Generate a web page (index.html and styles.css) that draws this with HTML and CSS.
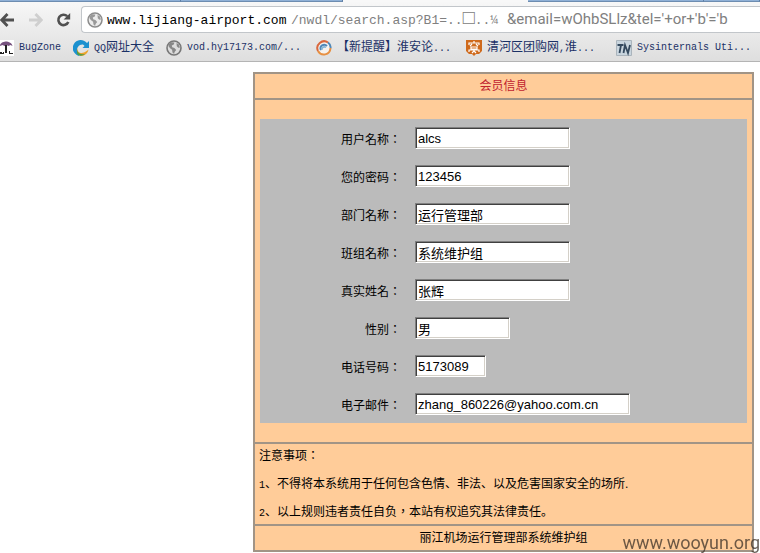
FILE: index.html
```html
<!DOCTYPE html>
<html>
<head>
    <meta charset="UTF-8">
    <meta name="viewport" content="width=device-width, initial-scale=1.0">
    <title>会员信息</title>
    <link rel="stylesheet" href="styles.css">
</head>
<body>
    <header class="browser">
        <div class="tabs">
            <span class="tab tab-first"></span>
            <span class="tab"></span>
            <span class="tab tab-active"></span>
            <span class="tab tab-short"></span>
            <span class="tab tab-rest"></span>
        </div>
        <div class="toolbar">
            <button type="button" class="nav-button" aria-label="后退">
                <svg width="15" height="16" viewBox="0 0 15 16"><path d="M7.5 2 1.8 8l5.7 6M2.5 8H14" fill="none" stroke="#505050" stroke-width="2.8"/></svg>
            </button>
            <button type="button" class="nav-button" aria-label="前进">
                <svg width="15" height="16" viewBox="0 0 15 16"><path d="M7.5 2 13.2 8l-5.7 6M12.5 8H1" fill="none" stroke="#cfcfcf" stroke-width="2.8"/></svg>
            </button>
            <button type="button" class="nav-button" aria-label="刷新">
                <svg width="15" height="16" viewBox="0 0 15 16"><path d="M11.2 4.2A5.2 5.2 0 1 0 12.3 10" fill="none" stroke="#505050" stroke-width="2.6"/><path d="M14.2 1v6.6H7.6z" fill="#505050"/></svg>
            </button>
            <div class="address">
                <svg width="16" height="16" viewBox="0 0 16 16"><circle cx="8" cy="8" r="7" fill="#ececec" stroke="#8c8c8c" stroke-width="1.5"/><path d="M2.5 4.5 5 2.2l3.4.3-.6 2-2 1 .4 1.8 2.2.8 1.8 2-1.6 1.8-.5 2.2-1.6-1.6-.4-2.7-2-1.6-1.6-2zM10.5 3l2.2 1.3 1.3 3.2-1.7.3-1.5-1.5z" fill="#999"/></svg>
                <div class="url" role="textbox" contenteditable="true" spellcheck="false" aria-label="地址"><span class="host">www.lijiang-airport.com</span><span class="path">/nwdl/search.asp?B1=..<span class="unknown">□</span>..¼</span><span class="query">&amp;email=wOhbSLlz&amp;tel='+or+'b'='b</span></div>
            </div>
        </div>
        <nav class="bookmarks">
            <a href="#" class="bookmark bookmark-bug">
                <svg width="14" height="16" viewBox="0 0 14 16"><path d="M0 0h14v16H0z" fill="#fff"/><path d="M0 6c0-3 3-4 5.500-4.500C9 1.500 12 3 12.500 6l-2-1-2 1-2-1-2 1-2-1z" fill="#77527f"/><path d="M5 5h2v8H5zM0 12h2v1h1v-1h1v2h5v-3h1v2h3v1H0z" fill="#222"/></svg>
                <span class="latin">BugZone</span>
            </a>
            <a href="#" class="bookmark bookmark-qq">
                <svg width="16" height="16" viewBox="0 0 16 16"><path d="M14 3A8 8 0 1 0 7 16C3 13 3 7 7 5c2-1 4-.5 4.500 1L9.500 8H16V1z" fill="#1c91cf"/><path d="M4.500 8c-.5 4 3 6 6.500 4.500 2-.8 3.500-2 4.500-3C15 13 12 16 8 16c-3.500-1-5-5-3.500-8z" fill="#eda32c"/><path d="M4 10c1 4 5 5 8 4-2 2-6 2.500-8 0z" fill="#4f9d48"/></svg>
                <span><span class="latin">QQ</span>网址大全</span>
            </a>
            <a href="#" class="bookmark">
                <svg width="16" height="16" viewBox="0 0 16 16"><circle cx="8" cy="8" r="7" fill="#ddd" stroke="#777" stroke-width="1.600"/><path d="M2.500 4.500 5 2.200l3.400.3-.6 2-2 1 .4 1.800 2.200.8 1.800 2-1.600 1.800-.5 2.200-1.600-1.600-.4-2.700-2-1.600-1.600-2zM10.500 3l2.200 1.300 1.300 3.200-1.700.3-1.500-1.500z" fill="#888"/></svg>
                <span class="latin">vod.hy17173.com/...</span>
            </a>
            <a href="#" class="bookmark">
                <svg width="16" height="16" viewBox="0 0 16 16"><circle cx="8" cy="8" r="6.500" fill="#f6f2ee"/><path d="M12 2.500A6.800 6.800 0 0 0 2 11" fill="none" stroke="#d9683e" stroke-width="2"/><path d="M2 11c3 5.500 12 4.500 12.500-3" fill="none" stroke="#e79042" stroke-width="2"/><path d="M12 2.500c2 1.500 2.800 3.500 2.500 5.500M5 10C3 6 8 3 11 6" fill="none" stroke="#4e87b8" stroke-width="2"/><path d="M6 10c-.5-2.500 2-4 4-2.500" fill="none" stroke="#81b4d5" stroke-width="1.500"/></svg>
                <span>【新提醒】淮安论<span class="latin">...</span></span>
            </a>
            <a href="#" class="bookmark">
                <svg width="16" height="16" viewBox="0 0 16 16"><path d="M0 0h16v11l-3 3H10l-2 2-2-2H3l-3-3z" fill="#cf6a1c"/><path d="M8 1v2M3 5V3h10v2M6 4 4 6M10 4l2 2M5 7h6v2H5zM3 12V10h10v2M8 9v2l-2 2M8 11l2 2" fill="none" stroke="#fff" stroke-width="1.200"/></svg>
                <span>清河区团购网<span class="latin">,</span>淮<span class="latin">...</span></span>
            </a>
            <a href="#" class="bookmark">
                <svg width="16" height="16" viewBox="0 0 16 16"><path d="M.5.5h15v15H.5z" fill="#c9d5de" stroke="#aab4bc"/><path d="M1.500 5h6M5 5 3.500 13M7.500 13l1.500-8 3 8 2-8" fill="none" stroke="#34495e" stroke-width="1.800"/></svg>
                <span class="latin">Sysinternals Uti...</span>
            </a>
        </nav>
    </header>

    <main class="panel">
        <h1>会员信息</h1>
        <form class="member">
            <div class="fields">
                <label for="user">用户名称：</label>
                <input type="text" id="user" class="medium" value="alcs">
                <label for="password">您的密码：</label>
                <input type="text" id="password" class="medium" value="123456">
                <label for="department">部门名称：</label>
                <input type="text" id="department" class="medium" value="运行管理部">
                <label for="team">班组名称：</label>
                <input type="text" id="team" class="medium" value="系统维护组">
                <label for="realname">真实姓名：</label>
                <input type="text" id="realname" class="medium" value="张辉">
                <label for="sex">性别：</label>
                <input type="text" id="sex" class="small" value="男">
                <label for="tel">电话号码：</label>
                <input type="text" id="tel" class="tiny" value="5173089">
                <label for="email">电子邮件：</label>
                <input type="text" id="email" class="large" value="zhang_860226@yahoo.com.cn">
            </div>
        </form>
        <section class="notes">
            <p>注意事项<span class="middle">：</span></p>
            <p><span class="number">1</span>、不得将本系统用于任何包含色情、非法、以及危害国家安全的场所.</p>
            <p><span class="number">2</span>、以上规则违者责任自负<span class="middle">，</span>本站有权追究其法律责任。</p>
        </section>
        <footer>丽江机场运行管理部系统维护组</footer>
    </main>

    <div class="watermark">www.wooyun.org</div>
</body>
</html>
```
FILE: styles.css
```css
* {
    box-sizing: border-box;
}
body {
    margin: 0;
    background: #fff;
    color: #000;
    font-family: "Liberation Sans", "Noto Sans CJK SC", sans-serif;
    font-size: 12px;
}

/* browser bars */
.browser {
    height: 62px;
    overflow: hidden;
    background: linear-gradient(#f8f8f8, #dedede);
    border-bottom: 1px solid #b4b4b4;
}
.tabs {
    display: flex;
    height: 2px;
}
.tab {
    width: 162px;
    background: #8fb0d6;
    border-right: 1px solid #5f7fa6;
    border-bottom: 1px solid #6d8cb0;
}
.tab-first {
    width: 181px;
}
.tab-active {
    width: 185px;
    background: #f8f8f8;
    border: 0;
}
.tab-short {
    width: 176px;
}
.tab-rest {
    flex: 1;
}
.toolbar {
    display: flex;
    align-items: center;
    height: 35px;
}
.nav-button {
    width: 15px;
    height: 16px;
    margin-right: 13px;
    padding: 0;
    border: 0;
    background: none;
}
.nav-button svg,
.address svg,
.bookmark svg {
    display: block;
    flex: none;
}
.address {
    display: flex;
    flex: 1;
    align-items: center;
    gap: 4px;
    height: 27px;
    min-width: 0;
    margin-left: -3px;
    padding-left: 5px;
    background: #fff;
    border: 1px solid #c2c6ca;
    border-right: 0;
    border-radius: 4px 0 0 4px;
}
.url {
    display: flex;
    align-items: baseline;
    line-height: 24px;
    white-space: nowrap;
    outline: none;
}
.host,
.path {
    font-family: "Liberation Mono", monospace;
    font-size: 13px;
}
.host {
    width: 184px;
}
.path {
    width: 216px;
    color: #808080;
}
.unknown {
    font-size: 20px;
    line-height: 1;
}
.query {
    color: #808080;
    font-family: Roboto, sans-serif;
    font-size: 15px;
}
.bookmarks {
    display: flex;
    align-items: center;
    height: 22px;
}
.bookmark {
    display: flex;
    flex: 0 0 150px;
    align-items: center;
    gap: 5px;
    color: #1b3166;
    line-height: 20px;
    text-decoration: none;
    white-space: nowrap;
}
.bookmark-bug {
    flex-basis: 73px;
}
.bookmark-qq {
    flex-basis: 93px;
}
.latin {
    font-family: "Liberation Mono", monospace;
    font-size: 10px;
}

/* member page */
.panel {
    margin: 10px 6px 0 253px;
    background: #fc9;
    border: 2px solid #a19486;
}
h1 {
    margin: 0;
    color: #c1222e;
    font-size: 12px;
    font-weight: normal;
    line-height: 24px;
    text-align: center;
}
.member {
    padding: 19px 5px;
    border-top: 2px solid #a19486;
    border-bottom: 2px solid #a19486;
}
.fields {
    display: grid;
    grid-template-columns: 141px 1fr;
    grid-auto-rows: 38px;
    column-gap: 14px;
    align-items: center;
    background: #bbb;
}
label {
    font-family: "Noto Sans CJK TC", sans-serif;
    text-align: right;
}
input {
    height: 22px;
    padding: 1px 2px;
    background: #fff;
    border: 1px solid;
    border-color: #808080 #fff #fff #808080;
    box-shadow: inset 1px 1px #404040, inset -1px -1px #d4d0c8;
    color: #000;
    font-family: "Liberation Sans", "Noto Sans CJK SC", sans-serif;
    font-size: 13px;
}
.tiny {
    width: 71px;
}
.small {
    width: 95px;
}
.medium {
    width: 155px;
}
.large {
    width: 215px;
}
.notes {
    padding: 0 4px;
    line-height: 24px;
}
.notes p {
    margin: 0 0 4px;
}
.notes p:last-child {
    margin-bottom: 0;
}
.notes span {
    line-height: 1;
}
.number {
    font-family: "Liberation Mono", monospace;
    font-size: 10px;
}
.middle {
    font-family: "Noto Sans CJK TC", sans-serif;
}
footer {
    border-top: 2px solid #a19486;
    line-height: 24px;
    text-align: center;
}
.watermark {
    position: fixed;
    right: 0;
    bottom: 0;
    color: rgba(60, 50, 40, 0.75);
    font-family: Roboto, sans-serif;
    font-size: 18px;
    line-height: 20px;
}
```
